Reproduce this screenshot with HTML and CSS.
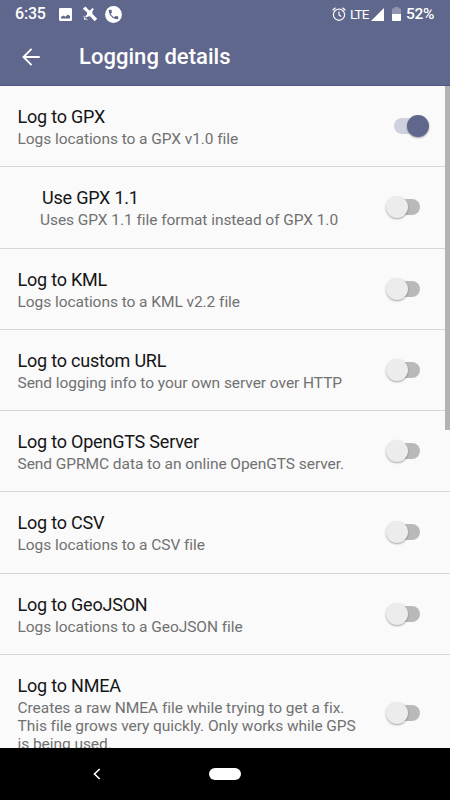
FILE: index.html
```html
<!DOCTYPE html>
<html lang="en">
<head>
<meta charset="utf-8">
<title>Logging details</title>
<link rel="stylesheet" href="styles.css">
</head>
<body>
<div class="screen">
  <header class="header">
    <div class="status">
      <span class="clock">6:35</span>
      <svg class="ico-photo" width="13" height="13" viewBox="0 0 13 13"><path fill="#fff" fill-rule="evenodd" d="M1.300 0h10.400A1.300 1.300 0 0 1 13 1.300v10.400a1.300 1.300 0 0 1-1.300 1.300H1.300A1.300 1.300 0 0 1 0 11.700V1.300A1.300 1.300 0 0 1 1.300 0zM2 10.500h9V8L8.800 6.500 6.500 8.800 4.500 7.400 2 9z"/></svg>
      <svg class="ico-sat" width="16" height="16" viewBox="0 0 16 16"><path fill="#fff" d="M.8 2.800 3.400.4l3.800 4.200 1.300-.5L10.600 2l1.200 1-1.500 2.500.2 2.400 4.700 4.800-2.500 2.600-4.600-5-2 .3-1.900 1-1-1 1.800-2.200.2-1.800z"/><path d="M1.800 9.800a4 4 0 0 0 3.700 4" fill="none" stroke="#fff" stroke-opacity=".75" stroke-width="1"/><circle cx="2.800" cy="12.800" r=".9" fill="#fff"/></svg>
      <svg class="ico-call" width="17" height="17" viewBox="0 0 17 17"><circle cx="8.500" cy="8.500" r="8.400" fill="#fff"/><path transform="translate(2.200 2.200) scale(.525)" fill="#60678c" d="M6.620 10.790c1.440 2.830 3.760 5.140 6.590 6.590l2.200-2.200c.27-.27.67-.36 1.020-.24 1.120.37 2.330.57 3.570.57.55 0 1 .45 1 1V20c0 .55-.45 1-1 1-9.390 0-17-7.610-17-17 0-.55.45-1 1-1h3.500c.55 0 1 .45 1 1 0 1.250.2 2.450.57 3.570.11.35.03.74-.25 1.020z"/></svg>
      <span class="grow"></span>
      <svg class="ico-alarm" width="14" height="14" viewBox="0 0 14 14" fill="none" stroke="#fff" stroke-width="1.200"><circle cx="7" cy="7.700" r="5.600"/><path d="M7 4.500v3.500l2.300 1.500M.6 3.300 3.500.8M13.400 3.300 10.500.8"/></svg>
      <span class="lte">LTE</span>
      <svg class="ico-signal" width="13" height="13" viewBox="0 0 13 13"><path d="M13 0v13H0z" fill="#fff"/></svg>
      <svg class="ico-battery" width="9" height="14" viewBox="0 0 9 14"><path d="M2.500 0h4v1.300H8a1 1 0 0 1 1 1V7H0V2.300a1 1 0 0 1 1-1h1.500z" fill="#9094b0"/><path d="M0 7h9v6a1 1 0 0 1-1 1H1a1 1 0 0 1-1-1z" fill="#fff"/></svg>
      <span class="percent">52%</span>
    </div>
    <div class="toolbar">
      <svg class="back" width="18" height="18" viewBox="0 0 18 18" fill="none" stroke="#fff" stroke-width="1.900"><path d="M17.700 9H1.500M9.600.9 1.500 9l8.100 8.100"/></svg>
      <h1 class="heading">Logging details</h1>
    </div>
  </header>
  <main class="list">
    <div class="row"><div class="text"><div class="title">Log to GPX</div><div class="summary">Logs locations to a GPX v1.0 file</div></div><div class="switch on"></div></div>
    <div class="row nested"><div class="text"><div class="title">Use GPX 1.1</div><div class="summary">Uses GPX 1.1 file format instead of GPX 1.0</div></div><div class="switch"></div></div>
    <div class="row"><div class="text"><div class="title">Log to KML</div><div class="summary">Logs locations to a KML v2.2 file</div></div><div class="switch"></div></div>
    <div class="row"><div class="text"><div class="title">Log to custom URL</div><div class="summary">Send logging info to your own server over HTTP</div></div><div class="switch"></div></div>
    <div class="row"><div class="text"><div class="title">Log to OpenGTS Server</div><div class="summary">Send GPRMC data to an online OpenGTS server.</div></div><div class="switch"></div></div>
    <div class="row"><div class="text"><div class="title">Log to CSV</div><div class="summary">Logs locations to a CSV file</div></div><div class="switch"></div></div>
    <div class="row"><div class="text"><div class="title">Log to GeoJSON</div><div class="summary">Logs locations to a GeoJSON file</div></div><div class="switch"></div></div>
    <div class="row tall"><div class="text"><div class="title">Log to NMEA</div><div class="summary">Creates a raw NMEA file while trying to get a fix.<br>This file grows very quickly. Only works while GPS<br>is being used.</div></div><div class="switch"></div></div>
    <div class="scrollbar"></div>
  </main>
  <nav class="navbar">
    <svg class="nav-back" width="8" height="12" viewBox="0 0 8 12" fill="none" stroke="#fff" stroke-width="1.600"><path d="M6.700 1 1.500 6l5.200 5"/></svg>
    <div class="pill"></div>
  </nav>
</div>
</body>
</html>
```

FILE: styles.css
```css
* { box-sizing: border-box; }
body { margin: 0; font-family: Roboto, sans-serif; }
.screen { width: 450px; height: 800px; display: flex; flex-direction: column; overflow: hidden; background: #fafafa; }
.header { height: 86px; flex: none; background: #60678c; color: #fff; border-bottom: 1px solid #50557f; }
.status { height: 28px; display: flex; align-items: center; padding: 0 15px; font-size: 16px; line-height: 28px; }
.status svg { flex: none; }
.clock { width: 44px; font-weight: 500; letter-spacing: -.2px; }
.ico-sat { margin-left: 10px; }
.ico-call { margin-left: 7px; }
.grow { flex: 1; }
.lte { margin-left: 4px; width: 19px; font-size: 13.500px; letter-spacing: -.9px; white-space: nowrap; }
.ico-signal { margin-left: 2px; }
.ico-battery { margin-left: 8px; }
.percent { width: 29px; margin-left: 5px; font-weight: 500; font-size: 15.500px; letter-spacing: -.3px; }
.toolbar { height: 57px; display: flex; align-items: center; padding-left: 22px; }
.heading { margin: 0 0 0 39px; font-size: 22px; font-weight: 500; line-height: 28px; letter-spacing: .04px; }
.list { flex: 1; min-height: 0; position: relative; overflow: hidden; }
.row { height: 81.250px; display: flex; align-items: center; border-bottom: 1px solid #d6d6d6; padding: 0 21px 0 17.500px; }
.text { flex: 1; white-space: nowrap; }
.title { font-size: 18px; line-height: 24px; color: #151515; letter-spacing: -.21px; padding-top: 1px; }
.summary { font-size: 15.500px; line-height: 18px; color: #717171; letter-spacing: -.055px; padding-top: 1px; }
.nested { padding-left: 40px; }
.nested .title { padding-left: 2px; }
.tall { height: 118px; }
.switch { position: relative; width: 43px; height: 24px; flex: none; }
.switch::before { content: ""; position: absolute; left: 10px; top: 4px; width: 24px; height: 16px; border-radius: 8px; background: #b9b9b9; }
.switch::after { content: ""; position: absolute; left: 0; top: 1px; width: 22px; height: 22px; border-radius: 50%; background: #ececec; box-shadow: 0 1px 2px rgba(0,0,0,.35); }
.switch.on::before { left: 8px; background: #cfd2de; }
.switch.on::after { left: 21px; background: #60678c; }
.scrollbar { position: absolute; right: 0; top: 0; width: 5px; height: 344px; background: #b3b3b3; }
.navbar { height: 52px; flex: none; background: #000; display: flex; align-items: center; }
.nav-back { margin-left: 93px; }
.pill { width: 32px; height: 12px; border-radius: 6px; background: #fff; margin-left: 108px; }
```
